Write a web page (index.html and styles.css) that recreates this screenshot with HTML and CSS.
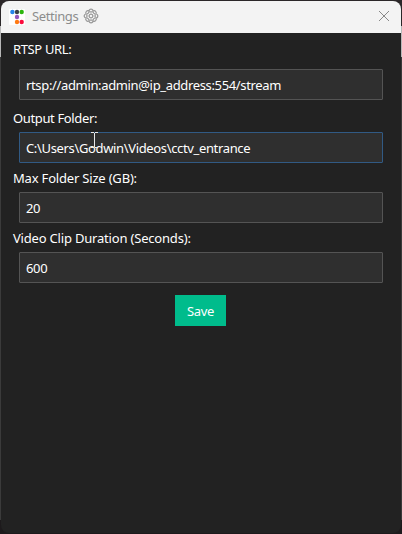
FILE: index.html
```
<!DOCTYPE html>
<html lang="en">
<head>
<meta charset="utf-8">
<title>Settings</title>
<link rel="stylesheet" href="styles.css">
</head>
<body>
<main class="window">
  <header class="titlebar">
    <svg class="logo" width="16" height="16" viewBox="0 0 16 16">
      <rect width="16" height="16" rx="1" fill="#fff"/>
      <circle cx="3.400" cy="3" r="2.200" fill="#2684ea"/>
      <circle cx="8" cy="3" r="2.200" fill="#3b4148"/>
      <circle cx="12.700" cy="3" r="2.200" fill="#2cb60d"/>
      <circle cx="8" cy="8" r="2.200" fill="#9455bd"/>
      <circle cx="8" cy="13" r="2.200" fill="#ff7a12"/>
      <circle cx="12.700" cy="13" r="2.200" fill="#fb0a3c"/>
    </svg>
    <h1 class="title">Settings</h1>
    <svg class="gear" width="16" height="16" viewBox="0 0 16 16" fill="none" stroke="#999">
      <path d="M6 3.200a2 2 0 0 1 4 0a2 2 0 0 1 2.800 2.800a2 2 0 0 1 0 4a2 2 0 0 1-2.800 2.800a2 2 0 0 1-4 0a2 2 0 0 1-2.800-2.800a2 2 0 0 1 0-4a2 2 0 0 1 2.800-2.800z" stroke-width="1.200"/>
      <circle cx="8" cy="8" r="4.300" stroke-width="1"/>
      <circle cx="8" cy="8" r="1.800" stroke-width="1.100"/>
      <path d="M8 3.700V6.200M8 9.800v2.500M3.700 8h2.500M9.800 8h2.500M5 5l1.700 1.700M9.300 9.300L11 11M11 5L9.300 6.700M6.700 9.300L5 11" stroke-width=".6"/>
    </svg>
    <svg class="close" width="12" height="12" viewBox="0 0 12 12" stroke="#898989">
      <path d="M1 1l10 10M11 1L1 11"/>
    </svg>
  </header>
  <form class="form">
    <div class="label first"><span class="snug">RTSP URL:</span></div>
    <div class="field"><span class="tight">rtsp://admin:admin@ip_address:554/stream</span></div>
    <div class="label second"><span class="snug">Output Folder:</span></div>
    <div class="field active"><span class="tight">C:\Users\Godwin\Videos\cctv_entrance</span>
      <svg class="cursor" width="7" height="16" viewBox="0 0 7 16" fill="none" stroke="#e8e8e8"><path d="M0 .5h3M4 .5h3M3.500 1v14M0 15.500h3M4 15.500h3"/></svg>
    </div>
    <div class="label"><span class="loose">Max Folder Size (GB):</span></div>
    <div class="field"><span class="tight">20</span></div>
    <div class="label"><span class="loose">Video Clip Duration (Seconds):</span></div>
    <div class="field"><span class="tight">600</span></div>
    <button class="save" type="button">Save</button>
  </form>
</main>
</body>
</html>
```
FILE: styles.css
```
* { box-sizing: border-box; }
body {
  margin: 0;
  height: 534px;
  padding: 1px;
  background: linear-gradient(#2b2729 0 26px, #b8b8b8 26px 57px, #3b3b3b 57px 520px, #1d1a1c 520px);
  font-family: "Noto Sans", "Open Sans", sans-serif;
  font-size: 13px;
  color: #fff;
  overflow: hidden;
}
.window {
  height: 532px;
  border-radius: 8px;
  background: #222;
  overflow: hidden;
}
.titlebar {
  display: flex;
  align-items: center;
  height: 32px;
  padding: 0 11px 2px 8px;
  background: #f3f3f3;
}
.logo { margin-top: 1px; }
.title {
  width: 47px;
  margin: 0 4px 0 7px;
  font-size: 13px;
  font-weight: 400;
  line-height: 30px;
  letter-spacing: -0.4px;
  color: #8c8c8c;
}
.close { margin-left: auto; }
.form {
  display: flex;
  flex-direction: column;
  padding: 0 18px 0 12px;
}
.label {
  display: flex;
  align-items: center;
  height: 29px;
  white-space: nowrap;
}
.label.first { height: 36px; padding-bottom: 5px; }
.label.second { height: 32px; padding-top: 4px; }
.snug { letter-spacing: -0.36px; }
.tight { letter-spacing: -0.35px; }
.loose { letter-spacing: -0.19px; }
.field {
  position: relative;
  display: flex;
  align-items: center;
  height: 31px;
  margin-left: 6px;
  padding: 0 6px;
  border: 1px solid #545454;
  border-radius: 1px;
  background: #2f2f2f;
  white-space: nowrap;
}
.field.active { border-color: #315a84; }
.cursor {
  position: absolute;
  left: 71px;
  top: -1px;
}
.save {
  align-self: center;
  width: 51px;
  height: 31px;
  margin: 12px 0 0 5px;
  padding: 1px 0 0;
  border: 0;
  background: #00bc8c;
  color: #fff;
  font: inherit;
  letter-spacing: -0.35px;
}
```
